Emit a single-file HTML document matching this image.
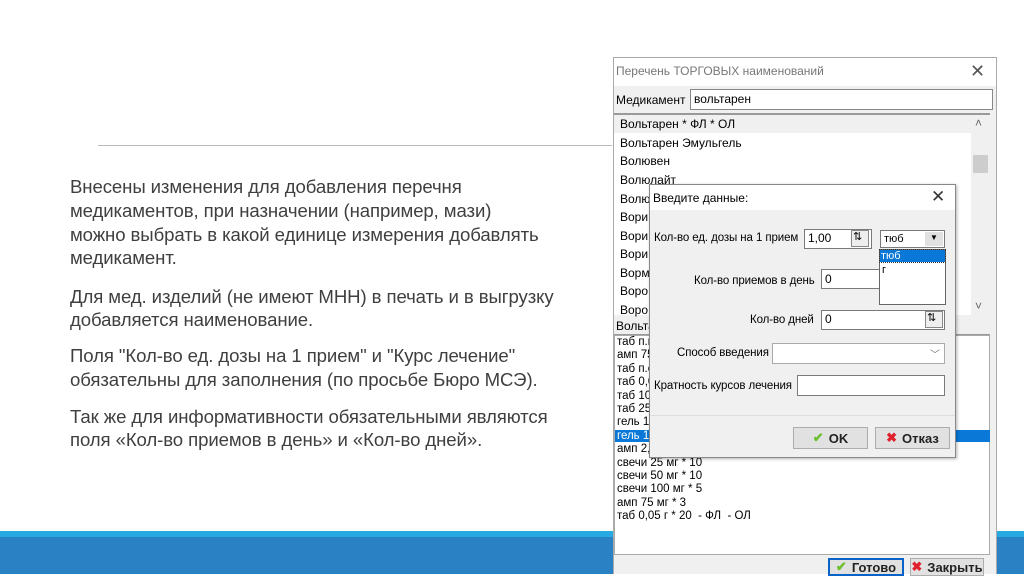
<!DOCTYPE html>
<html><head><meta charset="utf-8"><style>
*{margin:0;padding:0;box-sizing:border-box}
body{width:1024px;height:574px;overflow:hidden;background:#fff;position:relative;font-family:"Liberation Sans",sans-serif}
.a{position:absolute}
.t{position:absolute;left:70px;font-size:18.6px;color:#3f3f3f;white-space:nowrap;letter-spacing:-0.1px}
.w{font-size:12px;color:#000;white-space:nowrap;position:absolute}
.d{font-size:11.5px;letter-spacing:-0.1px}
.inp{position:absolute;background:#fff;border:1px solid #7a7a7a}
.spin{position:absolute;width:18px;height:17px;border:1px solid #888;background:#eee}
.btn{position:absolute;background:#e1e1e1;border:1px solid #adadad;font-size:13px;font-weight:bold;display:flex;align-items:center;justify-content:center;gap:5px;color:#222}
</style></head><body>
<div class="a" style="left:98px;top:145px;width:514px;height:1px;background:#bbb"></div>
<div class="t" style="top:176px">Внесены изменения для добавления перечня</div>
<div class="t" style="top:200px">медикаментов, при назначении (например, мази)</div>
<div class="t" style="top:224px">можно выбрать в какой единице измерения добавлять</div>
<div class="t" style="top:247px">медикамент.</div>
<div class="t" style="top:286px">Для мед. изделий (не имеют МНН) в печать и в выгрузку</div>
<div class="t" style="top:309px">добавляется наименование.</div>
<div class="t" style="top:345px">Поля "Кол-во ед. дозы на 1 прием" и "Курс лечение"</div>
<div class="t" style="top:369px">обязательны для заполнения (по просьбе Бюро МСЭ).</div>
<div class="t" style="top:406px">Так же для информативности обязательными являются</div>
<div class="t" style="top:429px">поля «Кол-во приемов в день» и «Кол-во дней».</div>

<div class="a" style="left:0;top:531px;width:1024px;height:6px;background:#27a9e1"></div>
<div class="a" style="left:0;top:537px;width:1024px;height:37px;background:#2a82c4"></div>

<!-- outer window -->
<div class="a" style="left:613px;top:57px;width:384px;height:517px;background:#f0f0f0;border-top:1px solid #aaa;border-left:1px solid #aaa;border-right:1px solid #aaa"></div>
<div class="a" style="left:614px;top:58px;width:382px;height:28px;background:#fff"></div>
<div class="w" style="left:616px;top:64px;color:#777;font-size:12px">Перечень ТОРГОВЫХ наименований</div>
<div class="w" style="left:970px;top:61px;font-size:18px;color:#555">✕</div>
<div class="w" style="left:616px;top:93px;font-size:12px">Медикамент</div>
<div class="inp" style="left:690px;top:89px;width:303px;height:21px;border-color:#888"></div>
<div class="w" style="left:694px;top:92px;font-size:12px">вольтарен</div>
<div class="a" style="left:614px;top:113px;width:376px;height:202px;background:#fff;border-top:2px solid #999"></div>
<div class="a" style="left:614px;top:115px;width:357px;height:18px;background:#f0f0f0"></div>
<div class="a" style="left:971px;top:115px;width:19px;height:200px;background:#f0f0f0"></div>
<div class="a" style="left:973px;top:155px;width:15px;height:18px;background:#cdcdcd"></div>
<div class="w" style="left:975px;top:116px;color:#666">˄</div>
<div class="w" style="left:975px;top:299px;color:#666">˅</div>
<div class="w" style="left:620px;top:117px">Вольтарен  * ФЛ  * ОЛ</div>
<div class="w" style="left:620px;top:136px">Вольтарен Эмульгель</div>
<div class="w" style="left:620px;top:154px">Волювен</div>
<div class="w" style="left:620px;top:173px">Волюлайт</div>
<div class="w" style="left:620px;top:192px">Волю</div>
<div class="w" style="left:620px;top:210px">Вори</div>
<div class="w" style="left:620px;top:229px">Вори</div>
<div class="w" style="left:620px;top:247px">Вори</div>
<div class="w" style="left:620px;top:266px">Ворм</div>
<div class="w" style="left:620px;top:284px">Воро</div>
<div class="w" style="left:620px;top:303px">Воро</div>
<div class="w" style="left:616px;top:319px">Вольта</div>
<div class="a" style="left:614px;top:334px;width:376px;height:1px;background:#999"></div>
<div class="a" style="left:614px;top:335px;width:376px;height:220px;background:#fff;border:1px solid #aaa"></div>
<div class="a" style="left:615px;top:430px;width:375px;height:12px;background:#0a78d7"></div>
<div style="position:absolute;left:617px;top:336px;font-size:11.5px;line-height:13.4px;white-space:pre;color:#000">таб п.к
амп 75
таб п.с
таб 0,0
таб 10
таб 25
гель 1
<span style="color:#fff">гель 1</span>
амп 2,5
свечи 25 мг * 10
свечи 50 мг * 10
свечи 100 мг * 5
амп 75 мг * 3
таб 0,05 г * 20  - ФЛ  - ОЛ</div>
<div class="btn" style="left:828px;top:558px;width:76px;height:18px;border:2px solid #0a64c8"><span style="color:#6bbf2a">✔</span>Готово</div>
<div class="btn" style="left:910px;top:558px;width:74px;height:18px"><span style="color:#e0202a">✖</span>Закрыть</div>

<!-- dialog -->
<div class="a" style="left:649px;top:184px;width:307px;height:274px;background:#f0f0f0;border:1px solid #888;box-shadow:1px 1px 3px rgba(0,0,0,.3)"></div>
<div class="a" style="left:650px;top:185px;width:305px;height:25px;background:#fff"></div>
<div class="w" style="left:653px;top:191px;font-size:12px">Введите данные:</div>
<div class="w" style="left:931px;top:187px;font-size:17px;color:#333">✕</div>
<div class="w d" style="left:654px;top:232px">Кол-во ед. дозы на 1 прием</div>
<div class="inp" style="left:804px;top:229px;width:68px;height:20px"></div>
<div class="w" style="left:808px;top:231px">1,00</div>
<div class="spin" style="left:851px;top:230px"></div><div class="w" style="left:853px;top:230px;font-size:11px">⇅</div>
<div class="inp" style="left:880px;top:230px;width:65px;height:18px"></div>
<div class="w" style="left:884px;top:233px;font-size:11px">тюб</div>
<div class="a" style="left:925px;top:232px;width:18px;height:14px;background:#e1e1e1"></div>
<div class="w" style="left:930px;top:233px;font-size:8px">▼</div>
<div class="w d" style="left:694px;top:275px">Кол-во приемов в день</div>
<div class="inp" style="left:821px;top:269px;width:60px;height:20px"></div>
<div class="w" style="left:825px;top:272px">0</div>
<div class="a" style="left:879px;top:249px;width:67px;height:56px;background:#fff;border:1px solid #666"></div>
<div class="a" style="left:880px;top:250px;width:65px;height:12px;background:#0a78d7;outline:1px dotted #333"></div>
<div class="w" style="left:881px;top:250px;color:#fff;font-size:11px">тюб</div>
<div class="w" style="left:882px;top:264px;font-size:11px">г</div>
<div class="w d" style="left:750px;top:314px">Кол-во дней</div>
<div class="inp" style="left:821px;top:310px;width:124px;height:20px"></div>
<div class="w" style="left:825px;top:312px">0</div>
<div class="spin" style="left:925px;top:311px"></div><div class="w" style="left:927px;top:311px;font-size:11px">⇅</div>
<div class="w d" style="left:677px;top:347px">Способ введения</div>
<div class="inp" style="left:772px;top:343px;width:173px;height:21px;border-color:#aaa"></div>
<div class="w" style="left:930px;top:346px;color:#777;font-size:10px">﹀</div>
<div class="w d" style="left:654px;top:380px">Кратность курсов лечения</div>
<div class="inp" style="left:797px;top:375px;width:148px;height:21px"></div>
<div class="a" style="left:650px;top:415px;width:305px;height:1px;background:#ddd"></div>
<div class="btn" style="left:793px;top:427px;width:75px;height:22px"><span style="color:#6bbf2a">✔</span>OK</div>
<div class="btn" style="left:875px;top:427px;width:75px;height:22px"><span style="color:#e0202a">✖</span>Отказ</div>
</body></html>
